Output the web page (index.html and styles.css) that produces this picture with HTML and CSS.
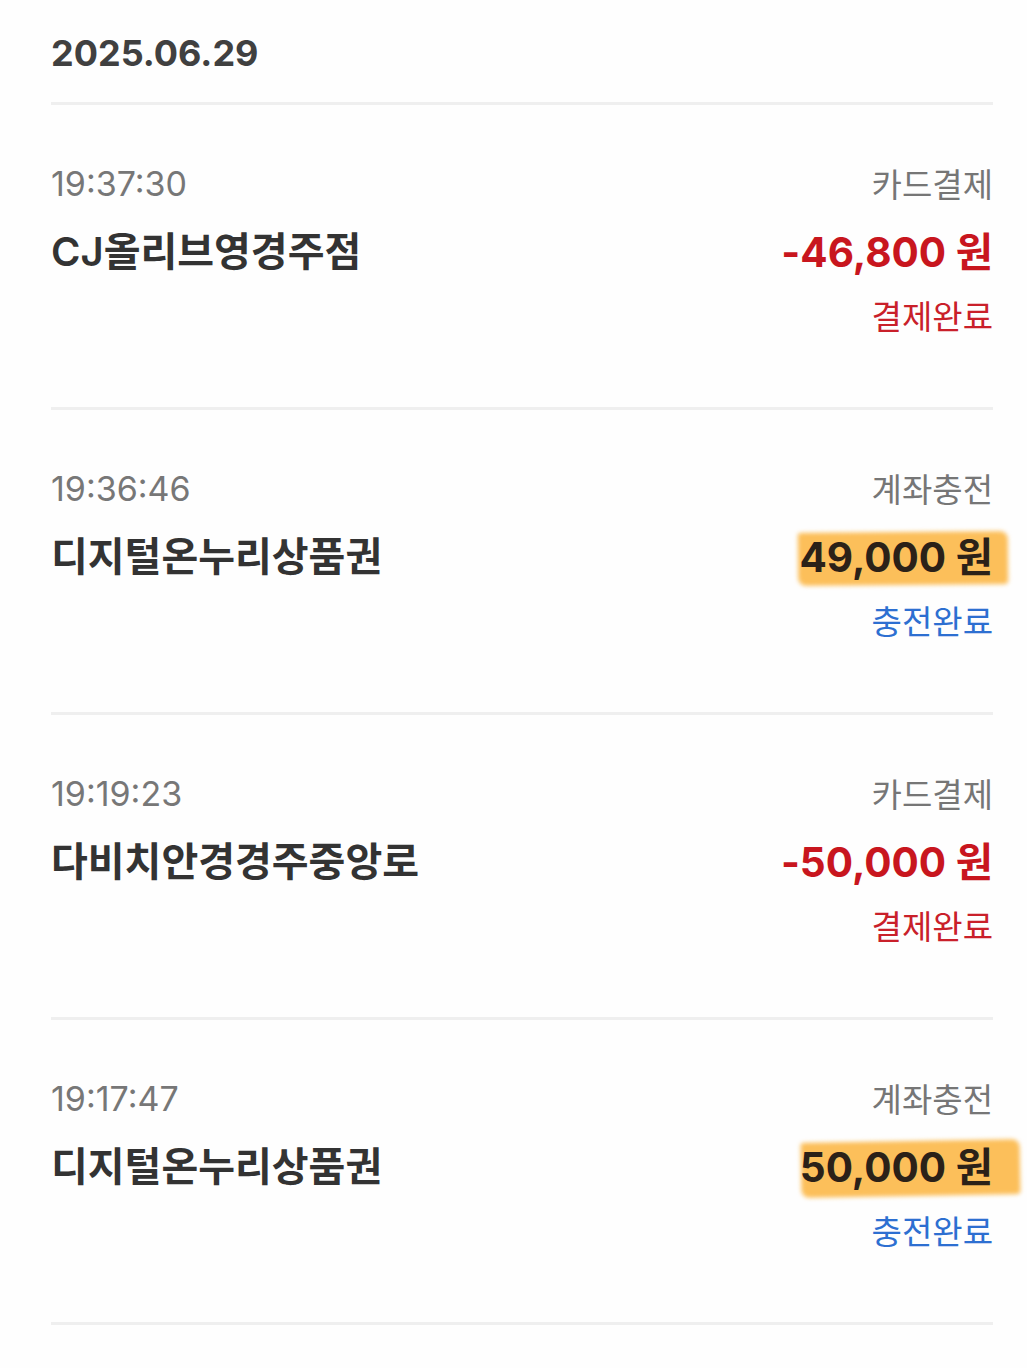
FILE: index.html
```html
<!DOCTYPE html>
<html lang="ko">
<head>
<meta charset="utf-8">
<title>거래내역</title>
<link rel="stylesheet" href="styles.css">
</head>
<body>
<main class="list">
  <h2 class="date">2025.06.29</h2>

  <section class="tx">
    <div class="tx-row top">
      <span class="time">19:37:30</span>
      <span class="kind">카드결제</span>
    </div>
    <div class="tx-row mid">
      <span class="name">CJ올리브영경주점</span>
      <span class="amount pay">-46,800 원</span>
    </div>
    <div class="tx-row bot">
      <span class="status pay">결제완료</span>
    </div>
  </section>

  <section class="tx">
    <div class="tx-row top">
      <span class="time">19:36:46</span>
      <span class="kind">계좌충전</span>
    </div>
    <div class="tx-row mid">
      <span class="name">디지털온누리상품권</span>
      <span class="amount charge hl hl-a">49,000 원</span>
    </div>
    <div class="tx-row bot">
      <span class="status charge">충전완료</span>
    </div>
  </section>

  <section class="tx">
    <div class="tx-row top">
      <span class="time">19:19:23</span>
      <span class="kind">카드결제</span>
    </div>
    <div class="tx-row mid">
      <span class="name">다비치안경경주중앙로</span>
      <span class="amount pay">-50,000 원</span>
    </div>
    <div class="tx-row bot">
      <span class="status pay">결제완료</span>
    </div>
  </section>

  <section class="tx">
    <div class="tx-row top">
      <span class="time">19:17:47</span>
      <span class="kind">계좌충전</span>
    </div>
    <div class="tx-row mid">
      <span class="name">디지털온누리상품권</span>
      <span class="amount charge hl hl-b">50,000 원</span>
    </div>
    <div class="tx-row bot">
      <span class="status charge">충전완료</span>
    </div>
  </section>
</main>
</body>
</html>
```

FILE: styles.css
```css
html, body {
  margin: 0;
  padding: 0;
  background: #fefefe;
}

body {
  font-family: Inter, "Noto Sans CJK KR", sans-serif;
  color: #333;
}

.list {
  margin: 0 34px 0 51px;
  padding-top: 31px;
}

.date {
  margin: 0;
  font-size: 36px;
  font-weight: 700;
  color: #404040;
  line-height: 44px;
  padding-bottom: 27px;
  border-bottom: 3px solid #efefef;
}

.tx {
  height: 302px;
  border-bottom: 3px solid #efefef;
}

.tx-row {
  display: flex;
  justify-content: space-between;
  align-items: center;
}

.top {
  padding-top: 58px;
  height: 40px;
}

.mid {
  margin-top: 23px;
  height: 46px;
}

.bot {
  justify-content: flex-end;
  margin-top: 23px;
  height: 40px;
}

.time {
  font-size: 34px;
  color: #777;
}

.kind {
  font-size: 33px;
  color: #767676;
}

.name {
  font-size: 40px;
  font-weight: 600;
  color: #333;
}

.amount {
  font-size: 40.5px;
  font-weight: 700;
  position: relative;
}

.amount.pay {
  color: #c8161e;
}

.amount.charge {
  color: #2b2118;
}

.status {
  font-size: 33px;
}

.status.pay {
  color: #c9202a;
}

.status.charge {
  color: #2d6fd1;
}

.hl {
  isolation: isolate;
}

.hl::before {
  content: "";
  position: absolute;
  z-index: -1;
  background: #fcbf5a;
  border-radius: 3px 8px 4px 8px;
  filter: blur(2px);
}

.hl-a::before {
  left: -1px;
  right: -15px;
  top: 7px;
  bottom: -1px;
  transform: rotate(-0.5deg);
}

.hl-b::before {
  left: 1px;
  right: -27px;
  top: 6px;
  bottom: -2px;
  transform: rotate(-1deg);
}
```
